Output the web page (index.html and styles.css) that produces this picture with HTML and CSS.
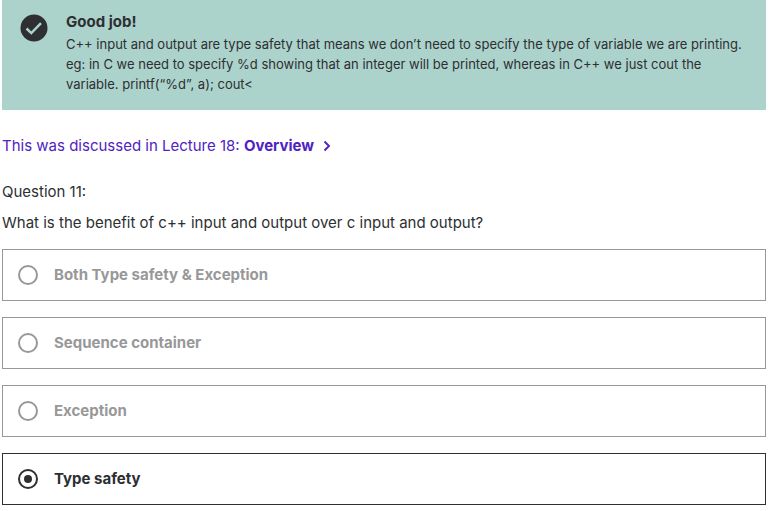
FILE: index.html
```html
<!DOCTYPE html>
<html lang="en">
<head>
<meta charset="utf-8">
<title>Quiz</title>
<link rel="stylesheet" href="styles.css">
</head>
<body>
<main class="quiz">
  <section class="alert">
    <svg class="alert-icon" viewBox="0 0 28 28" aria-hidden="true">
      <circle cx="14" cy="14" r="13.500" fill="#2d2f31"/>
      <path d="M6.500 14.500l4.800 4.600 9.700-10" fill="none" stroke="#acd2cc" stroke-width="2.500"/>
    </svg>
    <div class="alert-body">
      <h2 class="alert-title">Good job!</h2>
      <p class="alert-text">C++ input and output are type safety that means we don’t need to specify the type of variable we are printing.<br>eg: in C we need to specify %d showing that an integer will be printed, whereas in C++ we just cout the<br>variable. printf(“%d”, a); cout&lt;</p>
    </div>
  </section>
  <a class="related" href="#overview">
    <span>This was discussed in Lecture 18: <b>Overview</b></span>
    <svg class="chevron" viewBox="0 0 8 12" aria-hidden="true"><path d="M1.500 1.500L6 6l-4.500 4.500" fill="none" stroke="currentColor" stroke-width="1.900"/></svg>
  </a>
  <form>
    <fieldset class="question">
      <legend class="prompt"><span>Question 11:</span><span>What is the benefit of c++ input and output over c input and output?</span></legend>
      <label class="answer"><input type="radio" name="answer" disabled><span>Both Type safety &amp; Exception</span></label>
      <label class="answer"><input type="radio" name="answer" disabled><span>Sequence container</span></label>
      <label class="answer"><input type="radio" name="answer" disabled><span>Exception</span></label>
      <label class="answer answer-selected"><input type="radio" name="answer" checked><span>Type safety</span></label>
    </fieldset>
  </form>
</main>
</body>
</html>
```
FILE: styles.css
```css
* { box-sizing: border-box; }
body {
  margin: 0;
  background: #fff;
  color: #2d2f31;
  font-family: Inter, "Liberation Sans", sans-serif;
  font-size: 15px;
  line-height: 22px;
}
.quiz { padding: 0 5px 6px 2px; }
.alert {
  display: flex;
  gap: 18px;
  padding: 12px 16px 16px 18px;
  background: #acd2cc;
}
.alert-icon { flex: none; width: 28px; height: 28px; margin-top: 2px; }
.alert-title { margin: 0; font-size: 15px; line-height: 20px; font-weight: 700; }
.alert-text { margin: 2px 0 0; font-size: 13px; line-height: 20px; white-space: nowrap; }
.related {
  display: flex;
  align-items: center;
  gap: 9px;
  margin: 25px 0 24px;
  color: #5022c3;
  text-decoration: none;
}
.chevron { width: 8px; height: 12px; }
.question { margin: 0; padding: 0; border: 0; min-width: 0; }
.prompt { display: grid; gap: 9px; padding: 0; margin-bottom: 15px; }
.answer {
  display: flex;
  align-items: center;
  gap: 16px;
  height: 52px;
  padding: 0 15px;
  border: 1px solid #989899;
  color: #989899;
  font-weight: 700;
}
.answer + .answer { margin-top: 16px; }
.answer-selected { border-color: #2d2f31; color: #2d2f31; }
.answer input {
  appearance: none;
  flex: none;
  display: grid;
  place-content: center;
  width: 20px;
  height: 20px;
  margin: 0;
  border: 2px solid currentColor;
  border-radius: 50%;
  color: inherit;
}
.answer input:checked::before {
  content: "";
  width: 8px;
  height: 8px;
  border-radius: 50%;
  background: currentColor;
}
```
